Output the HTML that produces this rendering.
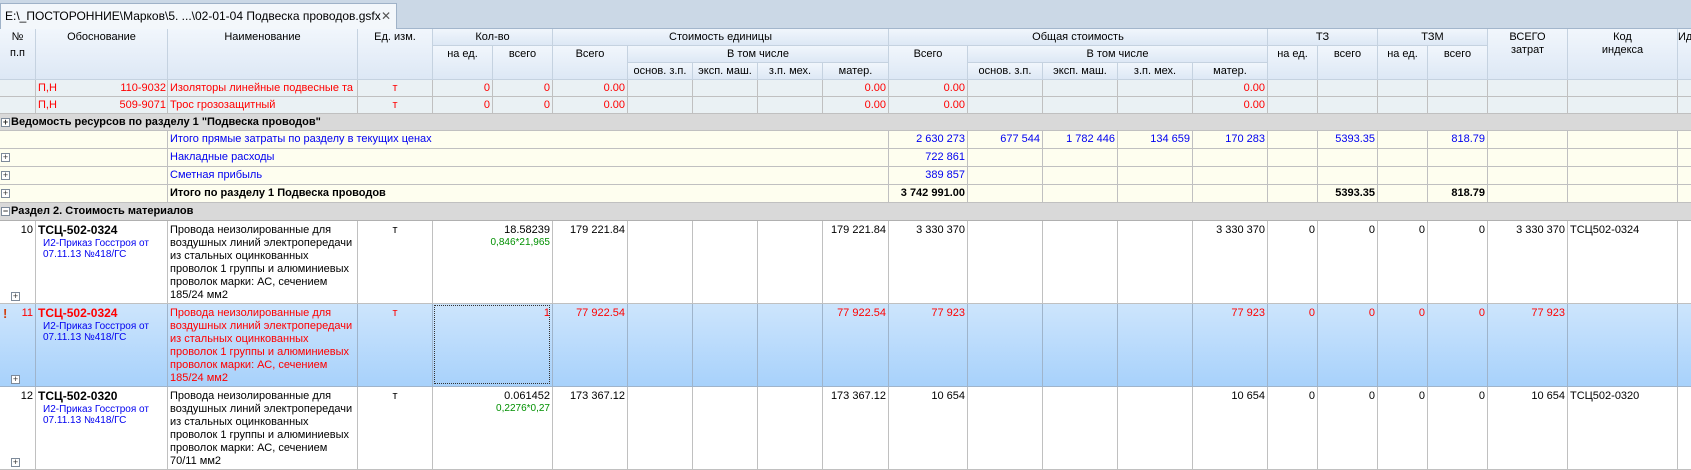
<!DOCTYPE html>
<html><head><meta charset="utf-8"><style>
*{margin:0;padding:0}
body{width:1691px;height:469px;overflow:hidden;background:#fff;font-family:Tahoma,"Liberation Sans","DejaVu Sans",sans-serif;font-size:11px;position:relative}
.a{position:absolute}
.row{position:absolute;left:0;width:1691px}
.c{position:absolute;top:0;height:100%;box-sizing:border-box;border-right:1px solid #c0c0c0;border-bottom:1px solid #c0c0c0;padding:0 2px;white-space:nowrap;overflow:hidden;line-height:16px}
.r{text-align:right}.ct{text-align:center}
.h{position:absolute;box-sizing:border-box;border-right:1px solid #c5d2e0;border-bottom:1px solid #c5d2e0;text-align:center;line-height:16px;background:linear-gradient(#f1f6fc,#dde8f5);overflow:hidden;white-space:nowrap}
.red{color:#f00}.blue{color:#0000f0}.g{color:#009000}
.pl{position:absolute;width:7px;height:7px;border:1px solid #7d8a9a;background:#fff;font-size:9px;line-height:7px;text-align:center;color:#333}
.big{line-height:13px;padding-top:3px}
.ml{white-space:normal}
</style></head><body>
<!-- tab strip -->
<div class="a" style="left:0;top:0;width:1691px;height:29px;background:#cbd8e6;border-bottom:1px solid #a3b6cc;box-sizing:border-box"></div>
<div class="a" style="left:0;top:3px;width:397px;height:27px;background:#f3f7fb;border:1px solid #9fb2c8;border-bottom:none;box-sizing:border-box;font-size:12px;line-height:24px;padding-left:4px;white-space:nowrap">E:\_ПОСТОРОННИЕ\Марков\5. ...\02-01-04 Подвеска проводов.gsfx<span style="position:absolute;left:380px;font-weight:bold;color:#555">✕</span></div>

<!-- header -->
<div class="h" style="left:0;top:29px;width:36px;height:51px">№<br>п.п</div>
<div class="h" style="left:36px;top:29px;width:132px;height:51px">Обоснование</div>
<div class="h" style="left:168px;top:29px;width:190px;height:51px">Наименование</div>
<div class="h" style="left:358px;top:29px;width:75px;height:51px">Ед. изм.</div>
<div class="h" style="left:433px;top:29px;width:120px;height:17px">Кол-во</div>
<div class="h" style="left:433px;top:46px;width:60px;height:34px">на ед.</div>
<div class="h" style="left:493px;top:46px;width:60px;height:34px">всего</div>
<div class="h" style="left:553px;top:29px;width:336px;height:17px">Стоимость единицы</div>
<div class="h" style="left:553px;top:46px;width:75px;height:34px">Всего</div>
<div class="h" style="left:628px;top:46px;width:261px;height:17px">В том числе</div>
<div class="h" style="left:628px;top:63px;width:65px;height:17px">основ. з.п.</div>
<div class="h" style="left:693px;top:63px;width:65px;height:17px">эксп. маш.</div>
<div class="h" style="left:758px;top:63px;width:65px;height:17px">з.п. мех.</div>
<div class="h" style="left:823px;top:63px;width:66px;height:17px">матер.</div>
<div class="h" style="left:889px;top:29px;width:379px;height:17px">Общая стоимость</div>
<div class="h" style="left:889px;top:46px;width:79px;height:34px">Всего</div>
<div class="h" style="left:968px;top:46px;width:300px;height:17px">В том числе</div>
<div class="h" style="left:968px;top:63px;width:75px;height:17px">основ. з.п.</div>
<div class="h" style="left:1043px;top:63px;width:75px;height:17px">эксп. маш.</div>
<div class="h" style="left:1118px;top:63px;width:75px;height:17px">з.п. мех.</div>
<div class="h" style="left:1193px;top:63px;width:75px;height:17px">матер.</div>
<div class="h" style="left:1268px;top:29px;width:110px;height:17px">ТЗ</div>
<div class="h" style="left:1268px;top:46px;width:50px;height:34px">на ед.</div>
<div class="h" style="left:1318px;top:46px;width:60px;height:34px">всего</div>
<div class="h" style="left:1378px;top:29px;width:110px;height:17px">ТЗМ</div>
<div class="h" style="left:1378px;top:46px;width:50px;height:34px">на ед.</div>
<div class="h" style="left:1428px;top:46px;width:60px;height:34px">всего</div>
<div class="h" style="left:1488px;top:29px;width:80px;height:51px;line-height:13px;padding-top:2px">ВСЕГО<br>затрат</div>
<div class="h" style="left:1568px;top:29px;width:110px;height:51px;line-height:13px;padding-top:2px">Код<br>индекса</div>
<div class="h" style="left:1678px;top:29px;width:20px;height:51px;text-align:left">Ид</div>

<!-- resource rows -->
<div class="row red" style="top:80px;height:17px;background:#eaf1f4">
<div class="c" style="left:0;width:36px"></div>
<div class="c" style="left:36px;width:132px">П,Н<span style="position:absolute;right:1px">110-9032</span></div>
<div class="c" style="left:168px;width:190px">Изоляторы линейные подвесные та</div>
<div class="c ct" style="left:358px;width:75px">т</div>
<div class="c r" style="left:433px;width:60px">0</div>
<div class="c r" style="left:493px;width:60px">0</div>
<div class="c r" style="left:553px;width:75px">0.00</div>
<div class="c" style="left:628px;width:65px"></div><div class="c" style="left:693px;width:65px"></div><div class="c" style="left:758px;width:65px"></div>
<div class="c r" style="left:823px;width:66px">0.00</div>
<div class="c r" style="left:889px;width:79px">0.00</div>
<div class="c" style="left:968px;width:75px"></div><div class="c" style="left:1043px;width:75px"></div><div class="c" style="left:1118px;width:75px"></div>
<div class="c r" style="left:1193px;width:75px">0.00</div>
<div class="c" style="left:1268px;width:50px"></div><div class="c" style="left:1318px;width:60px"></div><div class="c" style="left:1378px;width:50px"></div><div class="c" style="left:1428px;width:60px"></div><div class="c" style="left:1488px;width:80px"></div><div class="c" style="left:1568px;width:110px"></div><div class="c" style="left:1678px;width:20px"></div>
</div>
<div class="row red" style="top:97px;height:17px;background:#eaf1f4">
<div class="c" style="left:0;width:36px"></div>
<div class="c" style="left:36px;width:132px">П,Н<span style="position:absolute;right:1px">509-9071</span></div>
<div class="c" style="left:168px;width:190px">Трос грозозащитный</div>
<div class="c ct" style="left:358px;width:75px">т</div>
<div class="c r" style="left:433px;width:60px">0</div>
<div class="c r" style="left:493px;width:60px">0</div>
<div class="c r" style="left:553px;width:75px">0.00</div>
<div class="c" style="left:628px;width:65px"></div><div class="c" style="left:693px;width:65px"></div><div class="c" style="left:758px;width:65px"></div>
<div class="c r" style="left:823px;width:66px">0.00</div>
<div class="c r" style="left:889px;width:79px">0.00</div>
<div class="c" style="left:968px;width:75px"></div><div class="c" style="left:1043px;width:75px"></div><div class="c" style="left:1118px;width:75px"></div>
<div class="c r" style="left:1193px;width:75px">0.00</div>
<div class="c" style="left:1268px;width:50px"></div><div class="c" style="left:1318px;width:60px"></div><div class="c" style="left:1378px;width:50px"></div><div class="c" style="left:1428px;width:60px"></div><div class="c" style="left:1488px;width:80px"></div><div class="c" style="left:1568px;width:110px"></div><div class="c" style="left:1678px;width:20px"></div>
</div>

<!-- section 1 -->
<div class="row" style="top:114px;height:17px;background:#d9d9d9;border-bottom:1px solid #c0c0c0;box-sizing:border-box;font-weight:bold;line-height:16px;padding-left:11px">Ведомость ресурсов по разделу 1 "Подвеска проводов"<div class="pl" style="left:1px;top:4px">+</div></div>

<!-- yellow rows -->
<div class="row" style="top:131px;height:18px;background:#fefeef">
<div class="c" style="left:0;width:168px"></div>
<div class="c blue" style="left:168px;width:721px;line-height:17px">Итого прямые затраты по разделу в текущих ценах</div>
<div class="c r blue" style="left:889px;width:79px;line-height:17px">2 630 273</div>
<div class="c r blue" style="left:968px;width:75px;line-height:17px">677 544</div>
<div class="c r blue" style="left:1043px;width:75px;line-height:17px">1 782 446</div>
<div class="c r blue" style="left:1118px;width:75px;line-height:17px">134 659</div>
<div class="c r blue" style="left:1193px;width:75px;line-height:17px">170 283</div>
<div class="c" style="left:1268px;width:50px"></div>
<div class="c r blue" style="left:1318px;width:60px;line-height:17px">5393.35</div>
<div class="c" style="left:1378px;width:50px"></div>
<div class="c r blue" style="left:1428px;width:60px;line-height:17px">818.79</div>
<div class="c" style="left:1488px;width:80px"></div><div class="c" style="left:1568px;width:110px"></div><div class="c" style="left:1678px;width:20px"></div>
</div>
<div class="row" style="top:149px;height:18px;background:#fefeef">
<div class="c" style="left:0;width:168px"><div class="pl" style="left:1px;top:4px">+</div></div>
<div class="c blue" style="left:168px;width:721px;line-height:17px">Накладные расходы</div>
<div class="c r blue" style="left:889px;width:79px;line-height:17px">722 861</div>
<div class="c" style="left:968px;width:75px"></div><div class="c" style="left:1043px;width:75px"></div><div class="c" style="left:1118px;width:75px"></div><div class="c" style="left:1193px;width:75px"></div><div class="c" style="left:1268px;width:50px"></div><div class="c" style="left:1318px;width:60px"></div><div class="c" style="left:1378px;width:50px"></div><div class="c" style="left:1428px;width:60px"></div><div class="c" style="left:1488px;width:80px"></div><div class="c" style="left:1568px;width:110px"></div><div class="c" style="left:1678px;width:20px"></div>
</div>
<div class="row" style="top:167px;height:18px;background:#fefeef">
<div class="c" style="left:0;width:168px"><div class="pl" style="left:1px;top:4px">+</div></div>
<div class="c blue" style="left:168px;width:721px;line-height:17px">Сметная прибыль</div>
<div class="c r blue" style="left:889px;width:79px;line-height:17px">389 857</div>
<div class="c" style="left:968px;width:75px"></div><div class="c" style="left:1043px;width:75px"></div><div class="c" style="left:1118px;width:75px"></div><div class="c" style="left:1193px;width:75px"></div><div class="c" style="left:1268px;width:50px"></div><div class="c" style="left:1318px;width:60px"></div><div class="c" style="left:1378px;width:50px"></div><div class="c" style="left:1428px;width:60px"></div><div class="c" style="left:1488px;width:80px"></div><div class="c" style="left:1568px;width:110px"></div><div class="c" style="left:1678px;width:20px"></div>
</div>
<div class="row" style="top:185px;height:18px;background:#fefeef;font-weight:bold">
<div class="c" style="left:0;width:168px"><div class="pl" style="left:1px;top:4px;font-weight:normal">+</div></div>
<div class="c" style="left:168px;width:721px;line-height:17px">Итого по разделу 1 Подвеска проводов</div>
<div class="c r" style="left:889px;width:79px;line-height:17px">3 742 991.00</div>
<div class="c" style="left:968px;width:75px"></div><div class="c" style="left:1043px;width:75px"></div><div class="c" style="left:1118px;width:75px"></div><div class="c" style="left:1193px;width:75px"></div><div class="c" style="left:1268px;width:50px"></div>
<div class="c r" style="left:1318px;width:60px;line-height:17px">5393.35</div>
<div class="c" style="left:1378px;width:50px"></div>
<div class="c r" style="left:1428px;width:60px;line-height:17px">818.79</div>
<div class="c" style="left:1488px;width:80px"></div><div class="c" style="left:1568px;width:110px"></div><div class="c" style="left:1678px;width:20px"></div>
</div>

<!-- section 2 -->
<div class="row" style="top:203px;height:18px;background:#d9d9d9;border-bottom:1px solid #b0b0b0;box-sizing:border-box;font-weight:bold;line-height:17px;padding-left:11px">Раздел 2. Стоимость материалов<div class="pl" style="left:1px;top:4px">−</div></div>

<!-- item rows -->
<div class="row" style="top:221px;height:83px;background:#fff">
<div class="c r big" style="left:0;width:36px">10<div class="pl" style="left:11px;top:71px">+</div></div>
<div class="c big" style="left:36px;width:132px"><b style="font-size:12px">ТСЦ-502-0324</b><div class="blue" style="font-size:10px;line-height:11px;padding-left:5px">И2-Приказ Госстроя от<br>07.11.13 №418/ГС</div></div>
<div class="c big ml" style="left:168px;width:190px">Провода неизолированные для воздушных линий электропередачи из стальных оцинкованных проволок 1 группы и алюминиевых проволок марки: АС, сечением 185/24 мм2</div>
<div class="c ct big" style="left:358px;width:75px">т</div>
<div class="c r big" style="left:433px;width:120px">18.58239<div class="g" style="font-size:10px;line-height:11px">0,846*21,965</div></div>
<div class="c r big" style="left:553px;width:75px">179 221.84</div>
<div class="c" style="left:628px;width:65px"></div><div class="c" style="left:693px;width:65px"></div><div class="c" style="left:758px;width:65px"></div>
<div class="c r big" style="left:823px;width:66px">179 221.84</div>
<div class="c r big" style="left:889px;width:79px">3 330 370</div>
<div class="c" style="left:968px;width:75px"></div><div class="c" style="left:1043px;width:75px"></div><div class="c" style="left:1118px;width:75px"></div>
<div class="c r big" style="left:1193px;width:75px">3 330 370</div>
<div class="c r big" style="left:1268px;width:50px">0</div><div class="c r big" style="left:1318px;width:60px">0</div><div class="c r big" style="left:1378px;width:50px">0</div><div class="c r big" style="left:1428px;width:60px">0</div>
<div class="c r big" style="left:1488px;width:80px">3 330 370</div>
<div class="c big" style="left:1568px;width:110px">ТСЦ502-0324</div><div class="c" style="left:1678px;width:20px"></div>
</div>

<div class="row red" style="top:304px;height:83px;background:linear-gradient(#cde5fc,#a7d1fb)">
<div class="c r big" style="left:0;width:36px;border-color:#9fb4cb">11<div class="a" style="left:3px;top:3px;color:#d04010;font-weight:bold;font-size:13px">!</div><div class="pl" style="left:11px;top:71px">+</div></div>
<div class="c big" style="left:36px;width:132px;border-color:#9fb4cb"><b style="font-size:12px">ТСЦ-502-0324</b><div class="blue" style="font-size:10px;line-height:11px;padding-left:5px">И2-Приказ Госстроя от<br>07.11.13 №418/ГС</div></div>
<div class="c big ml" style="left:168px;width:190px;border-color:#9fb4cb">Провода неизолированные для воздушных линий электропередачи из стальных оцинкованных проволок 1 группы и алюминиевых проволок марки: АС, сечением 185/24 мм2</div>
<div class="c ct big" style="left:358px;width:75px;border-color:#9fb4cb">т</div>
<div class="c r big" style="left:433px;width:120px;border-color:#9fb4cb"><div class="a" style="left:1px;top:1px;right:2px;bottom:2px;border:1px dotted #333"></div>1</div>
<div class="c r big" style="left:553px;width:75px;border-color:#9fb4cb">77 922.54</div>
<div class="c" style="left:628px;width:65px;border-color:#9fb4cb"></div><div class="c" style="left:693px;width:65px;border-color:#9fb4cb"></div><div class="c" style="left:758px;width:65px;border-color:#9fb4cb"></div>
<div class="c r big" style="left:823px;width:66px;border-color:#9fb4cb">77 922.54</div>
<div class="c r big" style="left:889px;width:79px;border-color:#9fb4cb">77 923</div>
<div class="c" style="left:968px;width:75px;border-color:#9fb4cb"></div><div class="c" style="left:1043px;width:75px;border-color:#9fb4cb"></div><div class="c" style="left:1118px;width:75px;border-color:#9fb4cb"></div>
<div class="c r big" style="left:1193px;width:75px;border-color:#9fb4cb">77 923</div>
<div class="c r big" style="left:1268px;width:50px;border-color:#9fb4cb">0</div><div class="c r big" style="left:1318px;width:60px;border-color:#9fb4cb">0</div><div class="c r big" style="left:1378px;width:50px;border-color:#9fb4cb">0</div><div class="c r big" style="left:1428px;width:60px;border-color:#9fb4cb">0</div>
<div class="c r big" style="left:1488px;width:80px;border-color:#9fb4cb">77 923</div>
<div class="c" style="left:1568px;width:110px;border-color:#9fb4cb"></div><div class="c" style="left:1678px;width:20px;border-color:#9fb4cb"></div>
</div>

<div class="row" style="top:387px;height:83px;background:#fff">
<div class="c r big" style="left:0;width:36px">12<div class="pl" style="left:11px;top:71px">+</div></div>
<div class="c big" style="left:36px;width:132px"><b style="font-size:12px">ТСЦ-502-0320</b><div class="blue" style="font-size:10px;line-height:11px;padding-left:5px">И2-Приказ Госстроя от<br>07.11.13 №418/ГС</div></div>
<div class="c big ml" style="left:168px;width:190px">Провода неизолированные для воздушных линий электропередачи из стальных оцинкованных проволок 1 группы и алюминиевых проволок марки: АС, сечением 70/11 мм2</div>
<div class="c ct big" style="left:358px;width:75px">т</div>
<div class="c r big" style="left:433px;width:120px">0.061452<div class="g" style="font-size:10px;line-height:11px">0,2276*0,27</div></div>
<div class="c r big" style="left:553px;width:75px">173 367.12</div>
<div class="c" style="left:628px;width:65px"></div><div class="c" style="left:693px;width:65px"></div><div class="c" style="left:758px;width:65px"></div>
<div class="c r big" style="left:823px;width:66px">173 367.12</div>
<div class="c r big" style="left:889px;width:79px">10 654</div>
<div class="c" style="left:968px;width:75px"></div><div class="c" style="left:1043px;width:75px"></div><div class="c" style="left:1118px;width:75px"></div>
<div class="c r big" style="left:1193px;width:75px">10 654</div>
<div class="c r big" style="left:1268px;width:50px">0</div><div class="c r big" style="left:1318px;width:60px">0</div><div class="c r big" style="left:1378px;width:50px">0</div><div class="c r big" style="left:1428px;width:60px">0</div>
<div class="c r big" style="left:1488px;width:80px">10 654</div>
<div class="c big" style="left:1568px;width:110px">ТСЦ502-0320</div><div class="c" style="left:1678px;width:20px"></div>
</div>
</body></html>
